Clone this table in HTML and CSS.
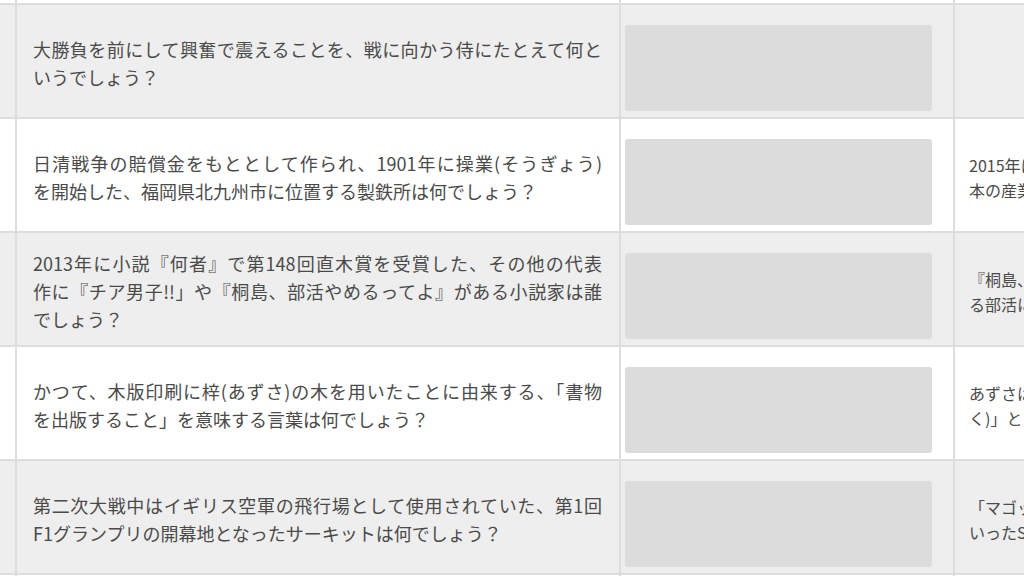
FILE: index.html
```html
<!DOCTYPE html>
<html lang="ja">
<head>
<meta charset="utf-8">
<title>クイズ一覧</title>
<link rel="stylesheet" href="styles.css">
</head>
<body>
<div class="table">
  <div class="row edge-top">
    <div class="cell num"></div><div class="cell q"></div><div class="cell ans"></div><div class="cell ex"></div>
  </div>

  <div class="row gray">
    <div class="cell num"></div>
    <div class="cell q"><p class="text"><span class="ln">大勝負を前にして興奮で震えることを、戦に向かう侍にたとえて何と</span><span class="ln">いうでしょう？</span></p></div>
    <div class="cell ans"><div class="box"></div></div>
    <div class="cell ex"></div>
  </div>

  <div class="row">
    <div class="cell num"></div>
    <div class="cell q"><p class="text"><span class="ln">日清戦争の賠償金をもととして作られ、1901年に操業(そうぎょう)</span><span class="ln">を開始した、福岡県北九州市に位置する製鉄所は何でしょう？</span></p></div>
    <div class="cell ans"><div class="box"></div></div>
    <div class="cell ex"><p class="note">2015年に世界遺産となった「明治日<br>本の産業革命遺産」の一つです。</p></div>
  </div>

  <div class="row gray">
    <div class="cell num"></div>
    <div class="cell q"><p class="text"><span class="ln">2013年に小説『何者』で第148回直木賞を受賞した、その他の代表</span><span class="ln">作に『チア男子!!」や『桐島、部活やめるってよ』がある小説家は誰</span><span class="ln">でしょう？</span></p></div>
    <div class="cell ans"><div class="box"></div></div>
    <div class="cell ex"><p class="note">『桐島、部活やめるってよ』は、桐島が突然辞め<br>る部活にまつわる群像劇です。</p></div>
  </div>

  <div class="row">
    <div class="cell num"></div>
    <div class="cell q"><p class="text"><span class="ln">かつて、木版印刷に梓(あずさ)の木を用いたことに由来する、「書物</span><span class="ln">を出版すること」を意味する言葉は何でしょう？</span></p></div>
    <div class="cell ans"><div class="box"></div></div>
    <div class="cell ex"><p class="note">あずさは「梓行(しこう)」「梓刻(しこ<br>く)」といった言葉にも使われます。</p></div>
  </div>

  <div class="row gray">
    <div class="cell num"></div>
    <div class="cell q"><p class="text"><span class="ln">第二次大戦中はイギリス空軍の飛行場として使用されていた、第1回</span><span class="ln">F1グランプリの開幕地となったサーキットは何でしょう？</span></p></div>
    <div class="cell ans"><div class="box"></div></div>
    <div class="cell ex"><p class="note">「マゴッツ」「ベケッツ」「チャペル」と<br>いったS字コーナーが有名です。</p></div>
  </div>

  <div class="row edge-bottom">
    <div class="cell num"></div><div class="cell q"></div><div class="cell ans"></div><div class="cell ex"></div>
  </div>
</div>
</body>
</html>
```

FILE: styles.css
```css
* {
  box-sizing: border-box;
}

html, body {
  margin: 0;
  padding: 0;
  overflow: hidden;
  background: #ffffff;
}

body {
  font-family: "Noto Sans CJK JP", "Noto Sans", sans-serif;
  color: #4a4a4a;
}

.table {
  width: max-content;
}

.row {
  display: grid;
  grid-template-columns: 17px 604px 334px 330px;
  height: 114px;
  border-bottom: 2px solid #dddddd;
  background: #ffffff;
}

.row.gray {
  background: #eeeeee;
}

.row.edge-top {
  height: 5px;
}

.row.edge-bottom {
  height: 40px;
  border-bottom: none;
}

.cell {
  border-right: 2px solid #dddddd;
  min-width: 0;
}

.q {
  display: flex;
  align-items: center;
  padding: 4px 17px 0 16px;
}

.text {
  margin: 0;
  width: 100%;
  font-size: 18px;
  line-height: 28px;
}

.ln {
  display: block;
  white-space: nowrap;
}

.ln:not(:last-child) {
  text-align: justify;
  text-align-last: justify;
  text-justify: inter-character;
}

.ans {
  padding: 20px 21px 0 4px;
}

.box {
  height: 86px;
  background: #dcdcdc;
  border-radius: 3px;
}

.ex {
  display: flex;
  align-items: center;
  padding: 6px 14px 0 14px;
  border-right: none;
}

.note {
  margin: 0;
  font-size: 16px;
  line-height: 25px;
  white-space: nowrap;
}
```
